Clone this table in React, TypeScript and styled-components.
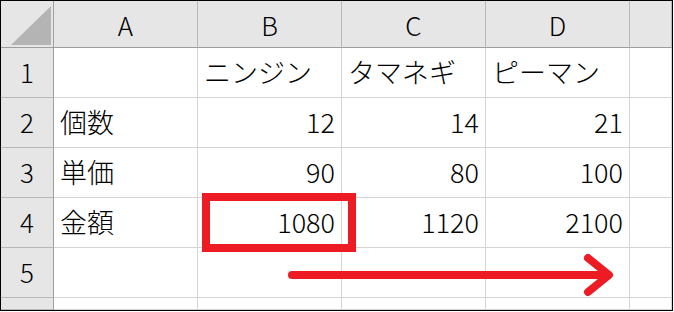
import React from "react";
import styled, { createGlobalStyle } from "styled-components";

const GlobalStyle = createGlobalStyle`
  html, body {
    margin: 0;
    padding: 0;
    background: #ffffff;
  }
  body {
    font-family: "Noto Sans CJK JP", "Noto Sans", sans-serif;
  }
`;

const Frame = styled.div`
  position: relative;
  width: 673px;
  height: 311px;
  box-sizing: border-box;
  border: 1px solid #000;
  overflow: hidden;
`;

const Grid = styled.div`
  display: grid;
  grid-template-columns: 53px repeat(4, 144px) 1fr;
  grid-template-rows: 47px repeat(5, 50px) 1fr;
  width: 100%;
  height: 100%;
`;

const Cell = styled.div<{ $align?: "left" | "right" }>`
  display: flex;
  align-items: center;
  justify-content: ${(p) => (p.$align === "right" ? "flex-end" : "flex-start")};
  box-sizing: border-box;
  padding: 0 6px 3px 6px;
  border-right: 1px solid #d4d4d4;
  border-bottom: 1px solid #d4d4d4;
  font-size: 27px;
  font-weight: 300;
  color: #000;
  white-space: nowrap;
`;

const ColHead = styled.div`
  display: flex;
  align-items: center;
  justify-content: center;
  box-sizing: border-box;
  background: #e6e6e6;
  border-right: 1px solid #b8b8b8;
  border-bottom: 1px solid #9e9e9e;
  font-size: 26px;
  font-weight: 300;
  color: #000;
`;

const RowHead = styled(ColHead)`
  border-right: 1px solid #9e9e9e;
  border-bottom: 1px solid #b8b8b8;
  padding-bottom: 3px;
`;

const Corner = styled(ColHead)`
  border-right: 1px solid #9e9e9e;
  align-items: flex-end;
  justify-content: flex-end;
  padding: 0 2px 2px 0;
`;

const Overlay = styled.svg`
  position: absolute;
  left: -1px;
  top: -1px;
  pointer-events: none;
`;

const columns = ["A", "B", "C", "D", ""];

type Row = { label: string; values: (string | number)[] };

const rows: Row[] = [
  { label: "1", values: ["", "ニンジン", "タマネギ", "ピーマン", ""] },
  { label: "2", values: ["個数", 12, 14, 21, ""] },
  { label: "3", values: ["単価", 90, 80, 100, ""] },
  { label: "4", values: ["金額", 1080, 1120, 2100, ""] },
  { label: "5", values: ["", "", "", "", ""] },
  { label: "", values: ["", "", "", "", ""] },
];

const red = "#ed1c24";

export default function App() {
  return (
    <>
      <GlobalStyle />
      <Frame>
        <Grid>
          <Corner>
            <svg width="40" height="39" viewBox="0 0 40 39">
              <polygon points="0,39 40,39 40,0" fill="#b4b4b4" />
            </svg>
          </Corner>
          {columns.map((c, i) => (
            <ColHead key={i}>{c}</ColHead>
          ))}
          {rows.map((r, ri) => (
            <React.Fragment key={ri}>
              <RowHead>{r.label}</RowHead>
              {r.values.map((v, ci) => (
                <Cell key={ci} $align={typeof v === "number" ? "right" : "left"}>
                  {v}
                </Cell>
              ))}
            </React.Fragment>
          ))}
        </Grid>
        {/* red highlight box around B4 and the arrow across row 5 */}
        <Overlay width="674" height="312" viewBox="0 0 674 312">
          <rect x="206" y="197" width="146" height="51" fill="none" stroke={red} strokeWidth="8" />
          <line x1="292" y1="275" x2="608" y2="275" stroke={red} strokeWidth="8" strokeLinecap="round" />
          <polyline
            points="588,258 609,275 588,292"
            fill="none"
            stroke={red}
            strokeWidth="8"
            strokeLinecap="round"
            strokeLinejoin="round"
          />
        </Overlay>
      </Frame>
    </>
  );
}
